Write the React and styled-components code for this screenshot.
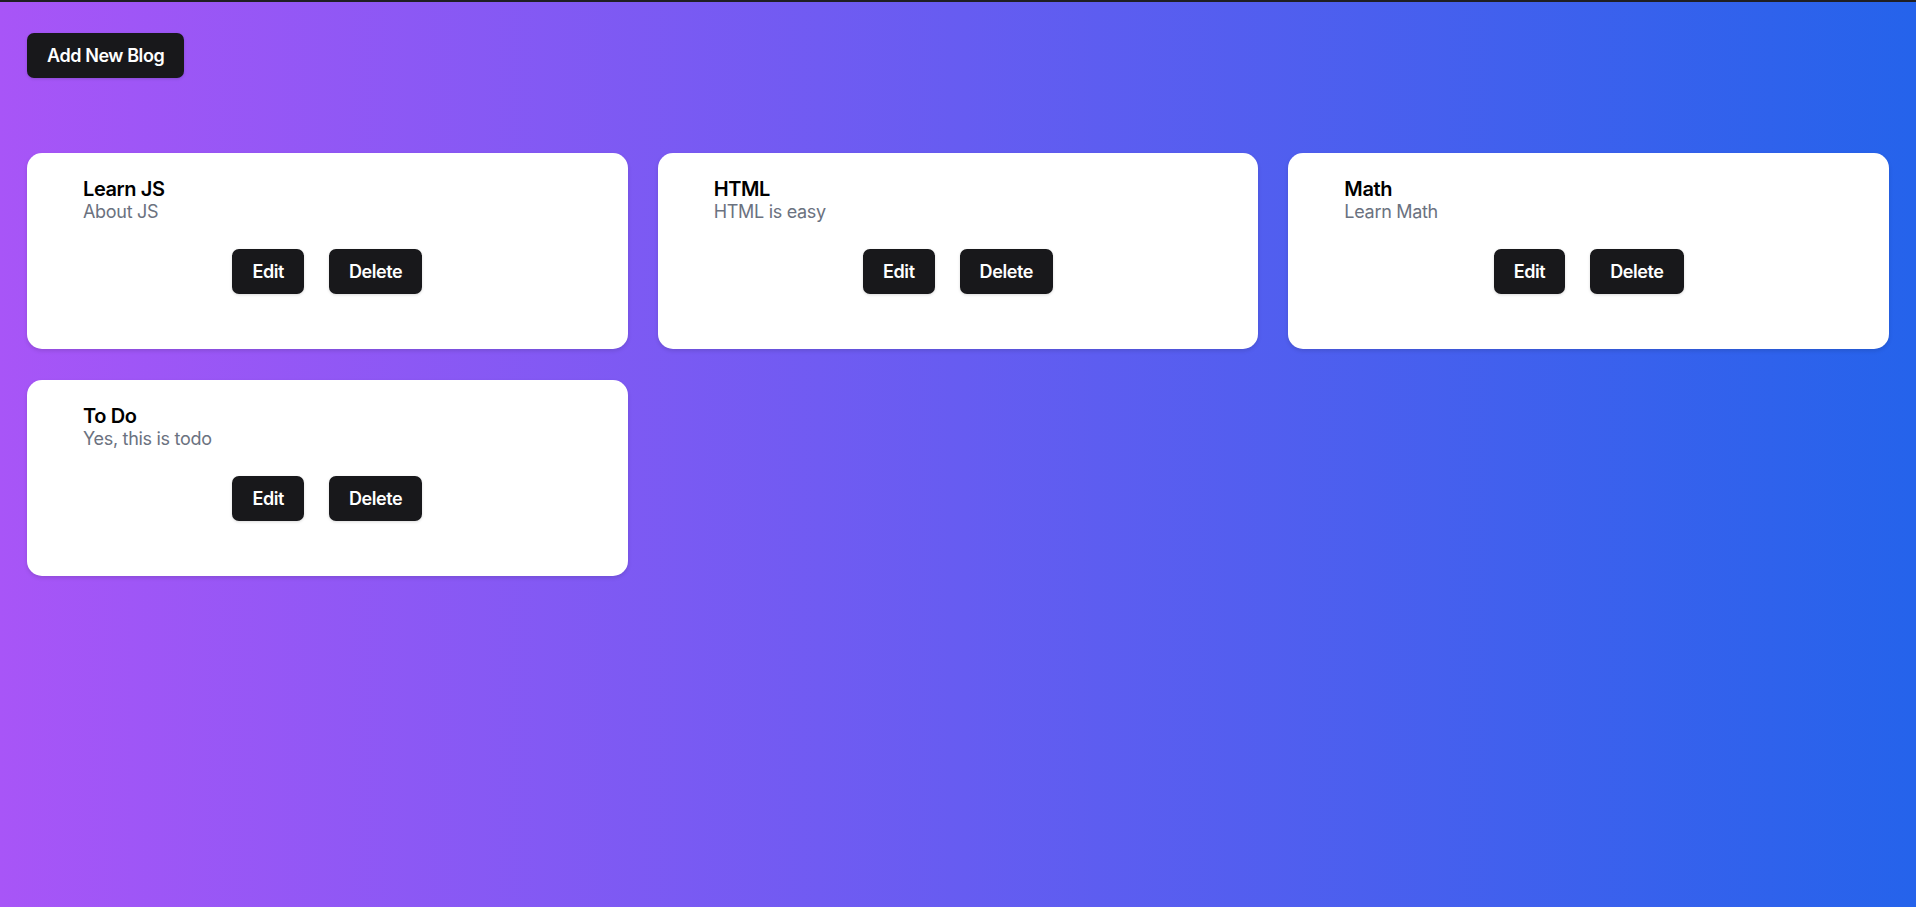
import React from "react";
import styled, { createGlobalStyle } from "styled-components";

const GlobalStyle = createGlobalStyle`
  html, body {
    margin: 0;
    padding: 0;
  }
  body {
    font-family: Inter, "Noto Sans", "Liberation Sans", sans-serif;
  }
  *, *::before, *::after { box-sizing: border-box; }
`;

const Page = styled.div`
  min-height: 100vh;
  border-top: 2px solid #1f1f23;
  padding: 31px 27px 40px;
  background: linear-gradient(to right, #a855f7, #2563eb);
`;

const DarkButton = styled.button`
  font-family: Inter, "Noto Sans", "Liberation Sans", sans-serif;
  font-size: 18px;
  font-weight: 600;
  line-height: 22px;
  letter-spacing: -0.42px;
  color: #ffffff;
  background: #18181b;
  border: none;
  border-radius: 7px;
  padding: 11.5px 20px;
  cursor: pointer;
  box-shadow: 0 1px 3px rgba(0, 0, 0, 0.15);
`;

const Grid = styled.div`
  margin-top: 75px;
  display: grid;
  grid-template-columns: repeat(3, 1fr);
  column-gap: 30px;
  row-gap: 31px;
`;

const Card = styled.div`
  height: 196px;
  background: #ffffff;
  border-radius: 15px;
  padding: 24px 28px 0 56px;
  box-shadow: 0 2px 4px rgba(0, 0, 0, 0.12);
  display: flex;
  flex-direction: column;
`;

const Title = styled.h2`
  margin: 0;
  font-size: 20px;
  font-weight: 600;
  line-height: 24px;
  letter-spacing: -0.4px;
  color: #000000;
`;

const Subtitle = styled.p`
  margin: 0;
  font-size: 18px;
  font-weight: 400;
  line-height: 22px;
  letter-spacing: -0.3px;
  color: #6b7280;
`;

const Actions = styled.div`
  margin-top: 26px;
  margin-left: -28px;
  display: flex;
  justify-content: center;
  gap: 25px;
`;

const blogs = [
  { id: 1, title: "Learn JS", body: "About JS" },
  { id: 2, title: "HTML", body: "HTML is easy" },
  { id: 3, title: "Math", body: "Learn Math" },
  { id: 4, title: "To Do", body: "Yes, this is todo" },
];

export default function App() {
  return (
    <>
      <GlobalStyle />
      <Page>
        <DarkButton>Add New Blog</DarkButton>
        <Grid>
          {blogs.map((b) => (
            <Card key={b.id}>
              <Title>{b.title}</Title>
              <Subtitle>{b.body}</Subtitle>
              <Actions>
                <DarkButton>Edit</DarkButton>
                <DarkButton>Delete</DarkButton>
              </Actions>
            </Card>
          ))}
        </Grid>
      </Page>
    </>
  );
}
